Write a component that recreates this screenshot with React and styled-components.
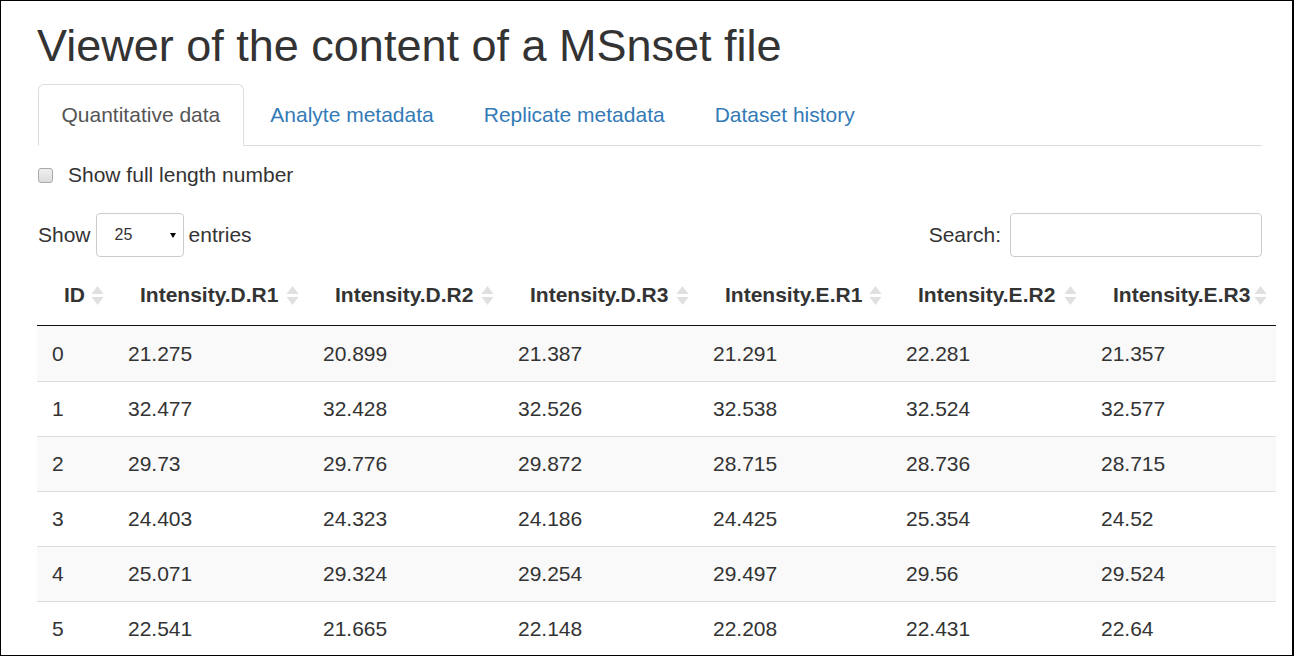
import React from 'react';
import styled, { createGlobalStyle } from 'styled-components';

const GlobalStyle = createGlobalStyle`
  html, body {
    margin: 0;
    padding: 0;
    background: #fff;
  }
  body {
    font-family: 'Liberation Sans', Arial, sans-serif;
    color: #333;
  }
`;

const columns = [
  { label: 'ID', width: 76 },
  { label: 'Intensity.D.R1', width: 195 },
  { label: 'Intensity.D.R2', width: 195 },
  { label: 'Intensity.D.R3', width: 195 },
  { label: 'Intensity.E.R1', width: 193 },
  { label: 'Intensity.E.R2', width: 195 },
  { label: 'Intensity.E.R3', width: 190 },
];

const rows = [
  ['0', '21.275', '20.899', '21.387', '21.291', '22.281', '21.357'],
  ['1', '32.477', '32.428', '32.526', '32.538', '32.524', '32.577'],
  ['2', '29.73', '29.776', '29.872', '28.715', '28.736', '28.715'],
  ['3', '24.403', '24.323', '24.186', '24.425', '25.354', '24.52'],
  ['4', '25.071', '29.324', '29.254', '29.497', '29.56', '29.524'],
  ['5', '22.541', '21.665', '22.148', '22.208', '22.431', '22.64'],
];

const tabs = ['Quantitative data', 'Analyte metadata', 'Replicate metadata', 'Dataset history'];

const SortIcon = () => (
  <svg width="13" height="21" viewBox="0 0 13 21">
    <path d="M6.5 1 L12.5 9 L0.5 9 Z" fill="#e0e0e0" />
    <path d="M6.5 20 L12.5 12 L0.5 12 Z" fill="#e0e0e0" />
  </svg>
);

const App = () => {
  return (
    <>
      <GlobalStyle />
      <Frame>
        <Container>
          <Title>Viewer of the content of a MSnset file</Title>
          <TabList>
            {tabs.map((t, i) => (
              <Tab key={t} active={i === 0}>
                {t}
              </Tab>
            ))}
          </TabList>
          <CheckRow>
            <CheckBox />
            <span>Show full length number</span>
          </CheckRow>
          <Controls>
            <Label>
              Show
              <Select>
                <span>25</span>
                <Caret />
              </Select>
              entries
            </Label>
            <Label>
              Search:
              <SearchInput />
            </Label>
          </Controls>
        </Container>
        <Table>
          <colgroup>
            {columns.map((c) => (
              <col key={c.label} style={{ width: c.width }} />
            ))}
          </colgroup>
          <thead>
            <tr>
              {columns.map((c) => (
                <HeadCell key={c.label}>
                  <HeadInner>
                    <span>{c.label}</span>
                    <SortIcon />
                  </HeadInner>
                </HeadCell>
              ))}
            </tr>
          </thead>
          <tbody>
            {rows.map((r, i) => (
              <Row key={i} odd={i % 2 === 0}>
                {r.map((v, j) => (
                  <Cell key={j} first={i === 0}>
                    {v}
                  </Cell>
                ))}
              </Row>
            ))}
          </tbody>
        </Table>
      </Frame>
    </>
  );
};

export default App;

const Frame = styled.div`
  box-sizing: border-box;
  width: 1294px;
  height: 656px;
  border: 1px solid #000;
  border-right-width: 2px;
  padding-left: 37px;
  overflow: hidden;
`;

const Container = styled.div`
  width: 1224px;
`;

const Title = styled.h1`
  margin: 20px 0 14px -1px;
  font-size: 45px;
  font-weight: 400;
  line-height: 49px;
  color: #333;
`;

const TabList = styled.div`
  display: flex;
  border-bottom: 1px solid #ddd;
`;

const Tab = styled.div`
  margin-right: 3px;
  margin-bottom: -1px;
  padding: 15px 22.5px;
  line-height: 30px;
  font-size: 21px;
  border: 1px solid ${(p) => (p.active ? '#ddd' : 'transparent')};
  border-bottom-color: ${(p) => (p.active ? '#fff' : 'transparent')};
  border-radius: 6px 6px 0 0;
  background: ${(p) => (p.active ? '#fff' : 'transparent')};
  color: ${(p) => (p.active ? '#555' : '#337ab7')};
`;

const CheckRow = styled.div`
  display: flex;
  align-items: center;
  gap: 15px;
  height: 30px;
  margin-top: 14px;
  font-size: 21px;
`;

const CheckBox = styled.span`
  box-sizing: border-box;
  width: 15px;
  height: 15px;
  border: 1px solid #a8a8a8;
  border-radius: 3px;
  background: linear-gradient(#f0f0f0, #dcdcdc);
`;

const Controls = styled.div`
  display: flex;
  justify-content: space-between;
  align-items: center;
  margin-top: 23px;
`;

const Label = styled.label`
  display: flex;
  align-items: center;
  gap: 5px;
  font-size: 21px;
`;

const Select = styled.div`
  box-sizing: border-box;
  width: 88px;
  height: 44px;
  display: flex;
  align-items: center;
  justify-content: space-between;
  padding: 0 7px 0 18px;
  border: 1px solid #ccc;
  border-radius: 4px;
  font-size: 16px;
  color: #333;
`;

const Caret = styled.span`
  width: 0;
  height: 0;
  border-left: 3px solid transparent;
  border-right: 3px solid transparent;
  border-top: 5px solid #000;
`;

const SearchInput = styled.div`
  box-sizing: border-box;
  width: 252px;
  height: 44px;
  margin-left: 4px;
  border: 1px solid #ccc;
  border-radius: 4px;
`;

const Table = styled.table`
  margin: 8px 0 0 -1px;
  width: 1239px;
  table-layout: fixed;
  border-collapse: separate;
  border-spacing: 0;
  font-size: 21px;
  color: #333;
`;

const HeadCell = styled.th`
  box-sizing: border-box;
  height: 61px;
  padding: 0 9px 0 27px;
  border-bottom: 1px solid #111;
  font-weight: 700;
  text-align: left;
`;

const HeadInner = styled.div`
  display: flex;
  align-items: center;
  justify-content: space-between;
  white-space: nowrap;
`;

const Row = styled.tr`
  background: ${(p) => (p.odd ? '#f9f9f9' : '#fff')};
`;

const Cell = styled.td`
  box-sizing: border-box;
  height: 55px;
  padding: 0 15px;
  border-top: ${(p) => (p.first ? 'none' : '1px solid #ddd')};
`;
